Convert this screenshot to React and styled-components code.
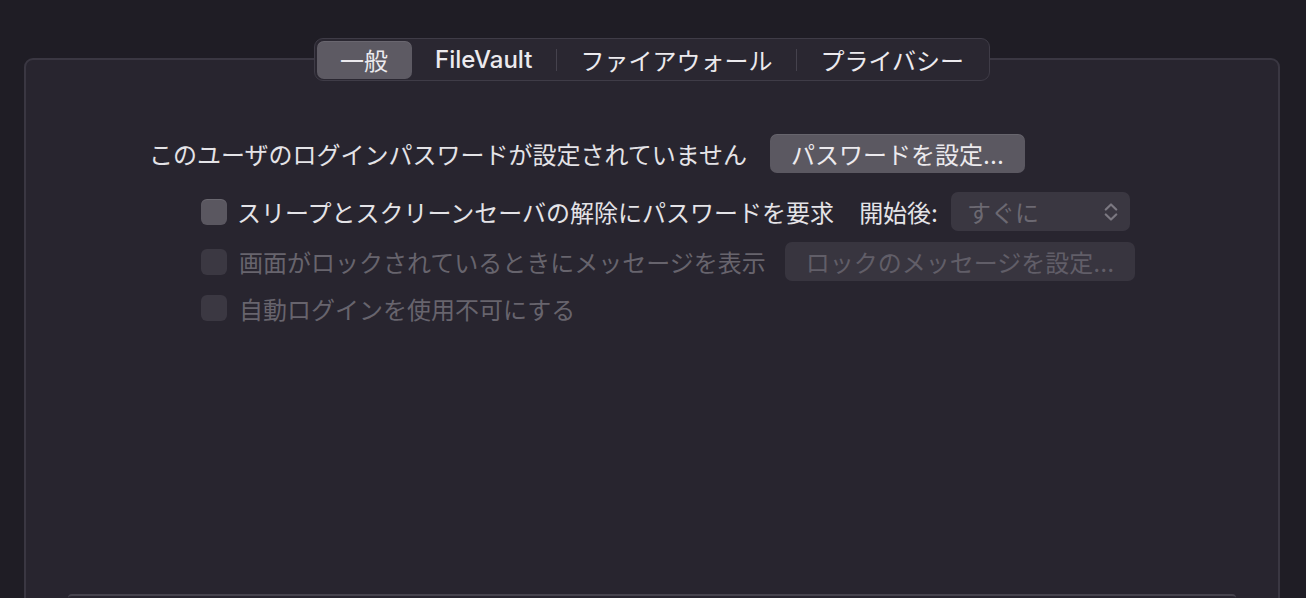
import styled, { createGlobalStyle } from "styled-components";

/* ---------- Global ---------- */

const GlobalStyle = createGlobalStyle`
  html, body {
    margin: 0;
    height: 598px;
    overflow: hidden;
    background: #1f1d25;
  }
  body {
    font-family: Inter, "Noto Sans CJK JP", sans-serif;
    color: #e4e3e7;
  }
`;

/* ---------- Layout ---------- */

const Page = styled.div`
  padding: 58px 26px 0 24px;
`;

/* Rounded group box that the tab strip sits on */
const Panel = styled.section`
  box-sizing: border-box;
  height: 560px;
  display: flex;
  flex-direction: column;
  background: #28252f;
  border: 2px solid #3a3742;
  border-radius: 9px;
`;

/* Segmented tab strip, centred on the panel's top edge */
const Tabs = styled.div`
  align-self: center;
  margin-top: -22px;
  display: flex;
  align-items: center;
  padding: 2px;
  height: 43px;
  box-sizing: border-box;
  background: #2a2731;
  border: 1px solid #3f3c47;
  border-radius: 9px;
`;

const Tab = styled.div`
  height: 38px;
  display: flex;
  align-items: center;
  padding: 0 23.5px;
  border-radius: 7px;
  font-size: 24px;
  font-weight: ${({ $latin }) => ($latin ? 500 : 400)};
  color: #eceaee;
  background: ${({ $active }) => ($active ? "#5d5a63" : "transparent")};
  box-shadow: ${({ $active }) =>
    $active ? "inset 0 1px 0 rgba(255,255,255,0.08)" : "none"};
`;

const TabDivider = styled.span`
  width: 1px;
  height: 22px;
  background: #45424d;
`;

const Body = styled.div`
  margin-top: 53px;
  padding-left: 123px;
  display: flex;
  flex-direction: column;
`;

const Row = styled.div`
  display: flex;
  align-items: center;
  height: ${({ $h }) => $h || 39}px;
  margin-top: ${({ $top }) => $top || 0}px;
  padding-left: ${({ $indent }) => ($indent ? 52 : 0)}px;
`;

const Label = styled.span`
  font-size: 24px;
  white-space: nowrap;
  color: ${({ $disabled }) => ($disabled ? "#67646d" : "#e4e3e7")};
  margin-right: ${({ $gap }) => $gap || 0}px;
`;

const Checkbox = styled.span`
  flex: none;
  width: 26px;
  height: 26px;
  border-radius: 6px;
  margin-right: ${({ $disabled }) => ($disabled ? 12 : 10)}px;
  background: ${({ $disabled }) => ($disabled ? "#3b3842" : "#5a5760")};
  box-shadow: ${({ $disabled }) =>
    $disabled ? "none" : "inset 0 1px 0 rgba(255,255,255,0.1)"};
`;

const Button = styled.button`
  height: 39px;
  padding: 0 ${({ $pad }) => $pad || 21}px;
  border: none;
  border-radius: 7px;
  font-family: inherit;
  font-size: 24px;
  white-space: nowrap;
  color: ${({ $disabled }) => ($disabled ? "#615e68" : "#eceaee")};
  background: ${({ $disabled }) => ($disabled ? "#38353f" : "#5b5861")};
  box-shadow: ${({ $disabled }) =>
    $disabled ? "none" : "inset 0 1px 0 rgba(255,255,255,0.08)"};
`;

/* Pop-up menu (disabled) */
const Popup = styled.div`
  width: 179px;
  height: 39px;
  box-sizing: border-box;
  display: flex;
  align-items: center;
  justify-content: space-between;
  padding: 0 12px 0 16px;
  border-radius: 7px;
  background: #3a3741;
  font-size: 24px;
  color: #6c6972;
`;

/* Bottom edge of the lower group box */
const Footer = styled.div`
  margin: auto 42px 0;
  height: 20px;
  border-top: 2px solid #47444e;
  border-radius: 4px 4px 0 0;
`;

/* ---------- Icons ---------- */

const UpDown = () => (
  <svg width="14" height="18" viewBox="0 0 14 18" fill="none">
    <path
      d="M1.8 6.5 L7 1.5 L12.2 6.5 M1.8 11.5 L7 16.5 L12.2 11.5"
      stroke="#7b7881"
      strokeWidth="2.2"
      strokeLinecap="round"
      strokeLinejoin="round"
    />
  </svg>
);

/* ---------- Component ---------- */

export default function App() {
  return (
    <>
      <GlobalStyle />
      <Page>
        <Panel>
          <Tabs>
            <Tab $active>一般</Tab>
            <Tab $latin>FileVault</Tab>
            <TabDivider />
            <Tab>ファイアウォール</Tab>
            <TabDivider />
            <Tab>プライバシー</Tab>
          </Tabs>

          <Body>
            <Row>
              <Label $gap={23}>このユーザのログインパスワードが設定されていません</Label>
              <Button>パスワードを設定...</Button>
            </Row>

            <Row $indent $top={19}>
              <Checkbox />
              <Label $gap={25}>スリープとスクリーンセーバの解除にパスワードを要求</Label>
              <Label $gap={13}>開始後:</Label>
              <Popup>
                すぐに
                <UpDown />
              </Popup>
            </Row>

            <Row $indent $top={11}>
              <Checkbox $disabled />
              <Label $disabled $gap={19}>画面がロックされているときにメッセージを表示</Label>
              <Button $disabled>ロックのメッセージを設定...</Button>
            </Row>

            <Row $indent $top={14} $h={26}>
              <Checkbox $disabled />
              <Label $disabled>自動ログインを使用不可にする</Label>
            </Row>
          </Body>

          <Footer />
        </Panel>
      </Page>
    </>
  );
}
